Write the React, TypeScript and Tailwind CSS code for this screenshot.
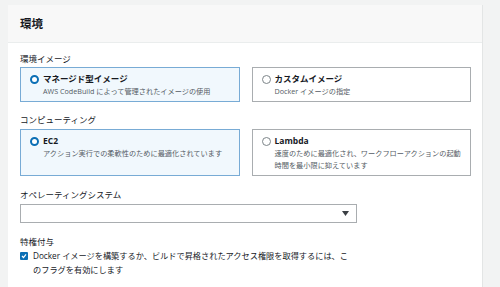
import React from "react";

const FONT = { fontFamily: '"Open Sans", "Noto Sans CJK JP", sans-serif' };

function Radio({ checked }: { checked: boolean }) {
  return checked ? (
    <span className="mt-[2px] box-border h-[9px] w-[9px] shrink-0 rounded-full border-[2.5px] border-[#0b6fb5] bg-white" />
  ) : (
    <span className="mt-[2px] box-border h-[9px] w-[9px] shrink-0 rounded-full border border-[#7d8589] bg-white" />
  );
}

function Tile({
  checked,
  title,
  desc,
}: {
  checked: boolean;
  title: string;
  desc: React.ReactNode;
}) {
  return (
    <div
      className={
        "flex gap-[4px] border pl-[9px] pr-[4px] pt-[5px] pb-[4px] " +
        (checked ? "border-[#78abd5] bg-[#f1f8fd]" : "border-[#a9adb0] bg-white")
      }
    >
      <Radio checked={checked} />
      <div className="flex flex-col">
        <div className="text-[8.5px] font-bold leading-[12px] text-[#16191f]">{title}</div>
        <div className="whitespace-nowrap text-[7.2px] leading-[12px] text-[#545b64]">{desc}</div>
      </div>
    </div>
  );
}

export default function App() {
  return (
    <div className="h-[287px] w-[500px] overflow-hidden bg-[#f2f3f3] pl-[8px] pt-[5px]" style={FONT}>
      <div className="h-[300px] w-[475px] border-r border-[#e3e5e5] bg-white">
        <div className="flex h-[38px] items-center border-b border-[#eaeded] bg-[#f8f8f8] px-[12px]">
          <span className="text-[11.5px] font-bold text-[#16191f]">環境</span>
        </div>
        <div className="pl-[12px] pr-[11px] pt-[10px] text-[#16191f]">
          <div className="mb-[2px] text-[8.5px] leading-[12px]">環境イメージ</div>
          <div className="grid grid-cols-2 gap-[12px]">
            <Tile checked title="マネージド型イメージ" desc="AWS CodeBuild によって管理されたイメージの使用" />
            <Tile checked={false} title="カスタムイメージ" desc="Docker イメージの指定" />
          </div>

          <div className="mb-[3px] mt-[12px] text-[8.5px] leading-[12px]">コンピューティング</div>
          <div className="grid grid-cols-2 gap-[12px]">
            <Tile checked title="EC2" desc="アクション実行での柔軟性のために最適化されています" />
            <Tile
              checked={false}
              title="Lambda"
              desc={
                <>
                  速度のために最適化され、ワークフローアクションの起動
                  <br />
                  時間を最小限に抑えています
                </>
              }
            />
          </div>

          <div className="mb-[3px] mt-[13px] text-[8.5px] leading-[12px]">オペレーティングシステム</div>
          <div className="flex h-[19px] w-[337px] items-center justify-end border border-[#a9adb0] bg-white pr-[7px]">
            <svg width="7" height="5" viewBox="0 0 7 5">
              <path d="M0 0 L7 0 L3.5 5 Z" fill="#3b3f44" />
            </svg>
          </div>

          <div className="mt-[13px] text-[8.5px] leading-[12px]">特権付与</div>
          <div className="mt-[1px] flex gap-[5px]">
            <span className="mt-[3px] flex h-[8px] w-[8px] shrink-0 items-center justify-center rounded-[1px] bg-[#0b6fb5]">
              <svg width="6" height="6" viewBox="0 0 6 6">
                <path d="M1 3 L2.5 4.5 L5 1.3" stroke="white" strokeWidth="1.2" fill="none" />
              </svg>
            </span>
            <div className="text-[8.2px] leading-[14px]">
              Docker イメージを構築するか、ビルドで昇格されたアクセス権限を取得するには、こ
              <br />
              のフラグを有効にします
            </div>
          </div>
        </div>
      </div>
    </div>
  );
}
